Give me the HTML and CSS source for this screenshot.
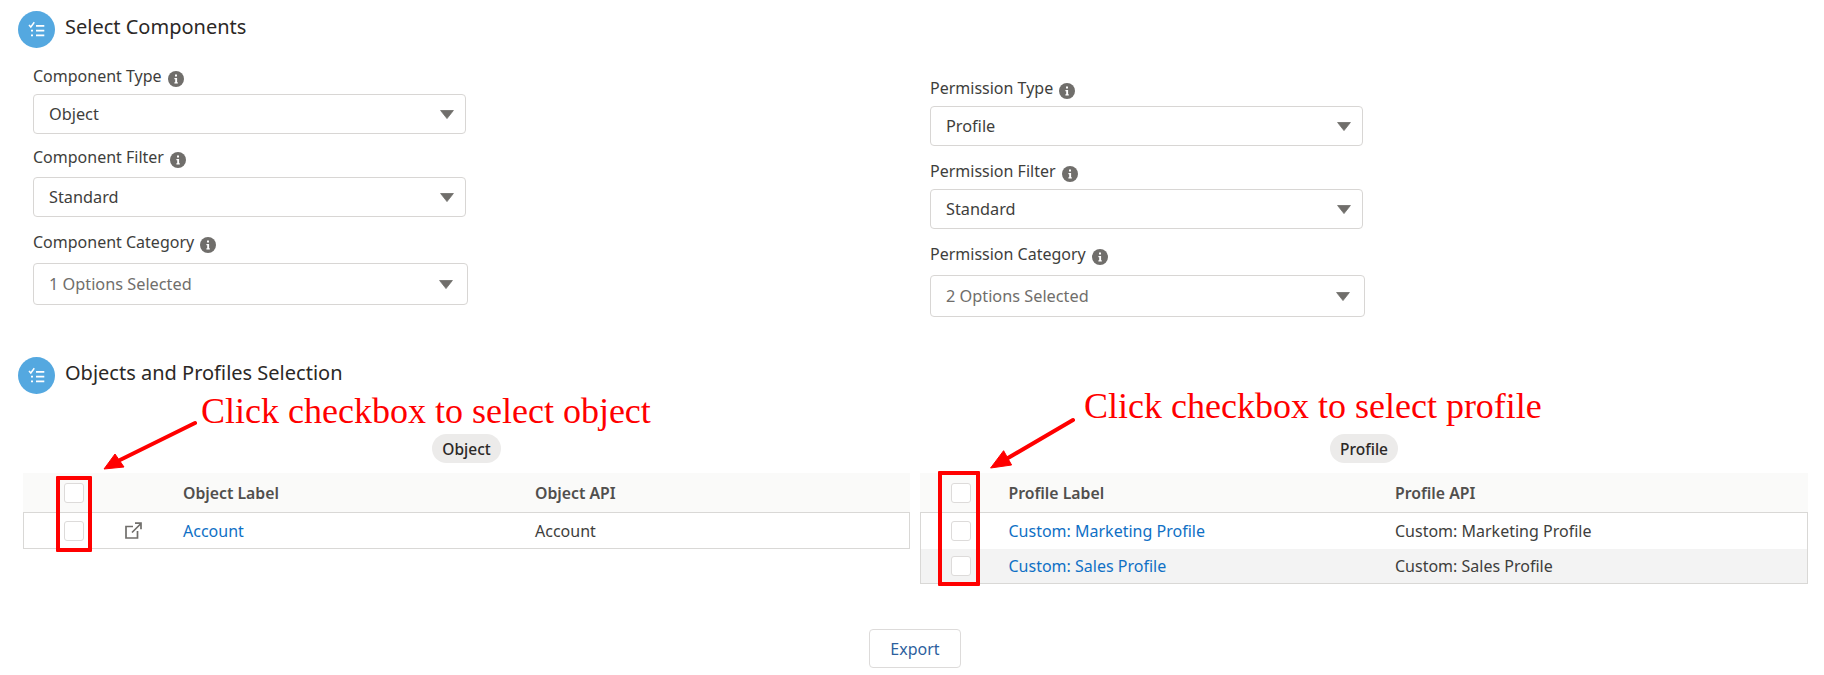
FILE: index.html
```html
<!DOCTYPE html>
<html lang="en">
<head>
<meta charset="utf-8">
<title>Select Components</title>
<link rel="stylesheet" href="styles.css">
</head>
<body>
<svg class="defs" width="0" height="0" aria-hidden="true">
  <symbol id="list" viewBox="0 0 37 37">
    <circle cx="18.5" cy="18.5" r="18.5" fill="#54a8e0"/>
    <path d="M11 14l1.8 2 3.5-4.7" fill="none" stroke="#fff" stroke-width="1.5"/>
    <path d="M18 14.8h8.3M18 19.6h8.3M18 24.3h8.3M13 19.6h2M13 24.3h2" fill="none" stroke="#fff" stroke-width="1.8"/>
  </symbol>
  <symbol id="info" viewBox="0 0 16 16">
    <circle cx="8" cy="8" r="8" fill="#706e6b"/>
    <path d="M7 3.6h2v2H7zM6.4 7h2.7v4.2h.7v1.2H6.4v-1.2h.8V8.2h-.8z" fill="#fff"/>
  </symbol>
  <symbol id="caret" viewBox="0 0 14 9">
    <path d="M.6.5h12.8L7 8.6z" fill="#706e6b" stroke="#706e6b" stroke-width=".8" stroke-linejoin="round"/>
  </symbol>
</svg>

<main class="page">
  <header class="section-head">
    <svg class="section-icon"><use href="#list"/></svg>
    <h2 class="section-title">Select Components</h2>
  </header>

  <section class="forms">
    <div class="form-col form-col-left">
      <div class="field">
        <div class="label label-a">Component Type <svg class="info"><use href="#info"/></svg></div>
        <div class="select"><span>Object</span><svg class="caret"><use href="#caret"/></svg></div>
      </div>
      <div class="field">
        <div class="label label-b">Component Filter <svg class="info"><use href="#info"/></svg></div>
        <div class="select"><span>Standard</span><svg class="caret"><use href="#caret"/></svg></div>
      </div>
      <div class="field">
        <div class="label label-c">Component Category <svg class="info"><use href="#info"/></svg></div>
        <div class="select select-multi"><span>1 Options Selected</span><svg class="caret"><use href="#caret"/></svg></div>
      </div>
    </div>
    <div class="form-col form-col-right">
      <div class="field">
        <div class="label label-d">Permission Type <svg class="info"><use href="#info"/></svg></div>
        <div class="select"><span>Profile</span><svg class="caret"><use href="#caret"/></svg></div>
      </div>
      <div class="field">
        <div class="label label-d">Permission Filter <svg class="info"><use href="#info"/></svg></div>
        <div class="select"><span>Standard</span><svg class="caret"><use href="#caret"/></svg></div>
      </div>
      <div class="field">
        <div class="label label-e">Permission Category <svg class="info"><use href="#info"/></svg></div>
        <div class="select select-multi"><span>2 Options Selected</span><svg class="caret"><use href="#caret"/></svg></div>
      </div>
    </div>
  </section>

  <header class="section-head section-head-second">
    <svg class="section-icon"><use href="#list"/></svg>
    <h2 class="section-title">Objects and Profiles Selection</h2>
  </header>

  <section class="panels">
    <div class="panel panel-object">
      <div class="pill-row"><span class="pill">Object</span></div>
      <div class="grid-table">
        <div class="row row-head">
          <span class="check"></span><span></span><span>Object Label</span><span>Object API</span>
        </div>
        <div class="row row-body">
          <span class="check"></span>
          <svg class="ext" viewBox="0 0 17 17"><path d="M8 4.500H1v11.500h11.500V9M7 10.500L15.500 2M10 1.200h6V7.200" fill="none" stroke="#706e6b" stroke-width="1.700"/></svg>
          <a class="link">Account</a><span>Account</span>
        </div>
      </div>
    </div>
    <div class="panel panel-profile">
      <div class="pill-row"><span class="pill">Profile</span></div>
      <div class="grid-table">
        <div class="row row-head">
          <span class="check"></span><span>Profile Label</span><span>Profile API</span>
        </div>
        <div class="row row-body">
          <span class="check"></span><a class="link">Custom: Marketing Profile</a><span>Custom: Marketing Profile</span>
        </div>
        <div class="row row-body row-alt">
          <span class="check"></span><a class="link">Custom: Sales Profile</a><span>Custom: Sales Profile</span>
        </div>
      </div>
    </div>
  </section>

  <div class="actions"><button class="btn" type="button">Export</button></div>

  <span class="note note-object">Click checkbox to select object</span>
  <span class="note note-profile">Click checkbox to select profile</span>
  <span class="mark mark-object"></span>
  <span class="mark mark-profile"></span>
  <svg class="arrows" viewBox="0 0 1824 675" aria-hidden="true">
    <path d="M195 423L120 460M1073 420L1008 458" stroke="#f00" stroke-width="4" stroke-linecap="round" fill="none"/>
    <path d="M104 469L115 454 124 467zM990.600 468L1003.600 450.700 1011.600 465z" fill="#f00" stroke="#f00" stroke-width="1"/>
  </svg>
</main>
</body>
</html>
```
FILE: styles.css
```css
* { box-sizing: border-box; }
html, body { margin: 0; padding: 0; background: #fff; }
body { font-family: "Noto Sans", "Open Sans", sans-serif; color: #3e3e3c; font-size: 16px; }
.defs { position: absolute; }
.page { position: relative; width: 1824px; height: 675px; padding-top: 11px; overflow: hidden; }

.section-head { display: flex; align-items: flex-start; padding-left: 18px; height: 37px; }
.section-head-second { margin-top: 40px; }
.section-icon { width: 37px; height: 37px; flex: none; }
.section-title { margin: 3px 0 0 10px; font-size: 20px; line-height: 26px; font-weight: 400; color: #2b2826; }

.forms { display: flex; padding-left: 33px; margin-top: 18px; }
.form-col { display: flex; flex-direction: column; width: 433px; }
.form-col-right { margin-left: 464px; margin-top: 12px; gap: 15px; }
.form-col-left { gap: 13px; }

.label { display: flex; align-items: center; gap: 6px; height: 20px; font-size: 16px; white-space: nowrap; color: #3e3e3c; }
.label-a { margin-bottom: 8px; }
.label-b { margin-bottom: 10px; }
.label-c { margin-top: 2px; margin-bottom: 11px; }
.label-d { margin-bottom: 8px; }
.label-e { margin-bottom: 11px; }
.info { width: 16px; height: 16px; flex: none; position: relative; top: 3px; }

.select { display: flex; align-items: center; justify-content: space-between; width: 433px; height: 40px; padding: 0 11px 0 15px; border: 1px solid #d8d6d4; border-radius: 4px; font-size: 16.300px; background: #fff; }
.select-multi { width: 435px; height: 42px; color: #706e6b; padding-right: 14px; }
.caret { width: 14px; height: 9px; flex: none; }

.panels { display: flex; gap: 10px; padding-left: 23px; margin-top: 40px; }
.panel-object { width: 887px; }
.panel-profile { width: 888px; }
.pill-row { display: flex; justify-content: center; height: 39px; }
.pill { display: flex; align-items: center; height: 29px; padding: 0 10px; border-radius: 15px; background: #ecebea; font-size: 15.500px; font-weight: 500; color: #2b2826; }

.grid-table { border: 1px solid #d9d8d6; border-top: 0; }
.row { display: grid; align-items: center; column-gap: 41px; padding-left: 40px; height: 36px; }
.row-body:last-child { height: 35px; }
.panel-object .row { grid-template-columns: 20px 17px 311px 1fr; }
.panel-profile .row { grid-template-columns: 20px 349px 1fr; column-gap: 37.500px; padding-left: 30px; }
.panel-profile .row-body:last-child { height: 34px; }
.row-head { height: 40px; background: #fafaf9; font-weight: 600; font-size: 15.800px; color: #514f4d; border-bottom: 1px solid #d9d8d6; margin: 0 -1px; padding-left: 41px; }
.panel-profile .row-head { padding-left: 31px; }
.row-alt { background: #f3f3f3; }
.check { display: block; width: 20px; height: 20px; background: #fff; border: 1px solid #dddbda; border-radius: 3px; }
.ext { width: 17px; height: 17px; }
.link { color: #0f70c5; }

.actions { display: flex; justify-content: center; padding-left: 6px; margin-top: 45px; }
.btn { width: 92px; height: 39px; background: #fff; border: 1px solid #dddbda; border-radius: 4px; font: 400 16px "Noto Sans", sans-serif; color: #2d5f9e; }

.note { position: absolute; font-family: "Liberation Serif", serif; font-size: 36px; line-height: 40px; color: #f00; white-space: nowrap; }
.note-object { left: 201px; top: 391px; }
.note-profile { left: 1084px; top: 386px; }
.mark { position: absolute; border: 4px solid #f00; border-radius: 1px; }
.mark-object { left: 56px; top: 476px; width: 36px; height: 76px; }
.mark-profile { left: 938px; top: 471px; width: 42px; height: 115px; }
.arrows { position: absolute; left: 0; top: 0; width: 1824px; height: 675px; pointer-events: none; }
```
